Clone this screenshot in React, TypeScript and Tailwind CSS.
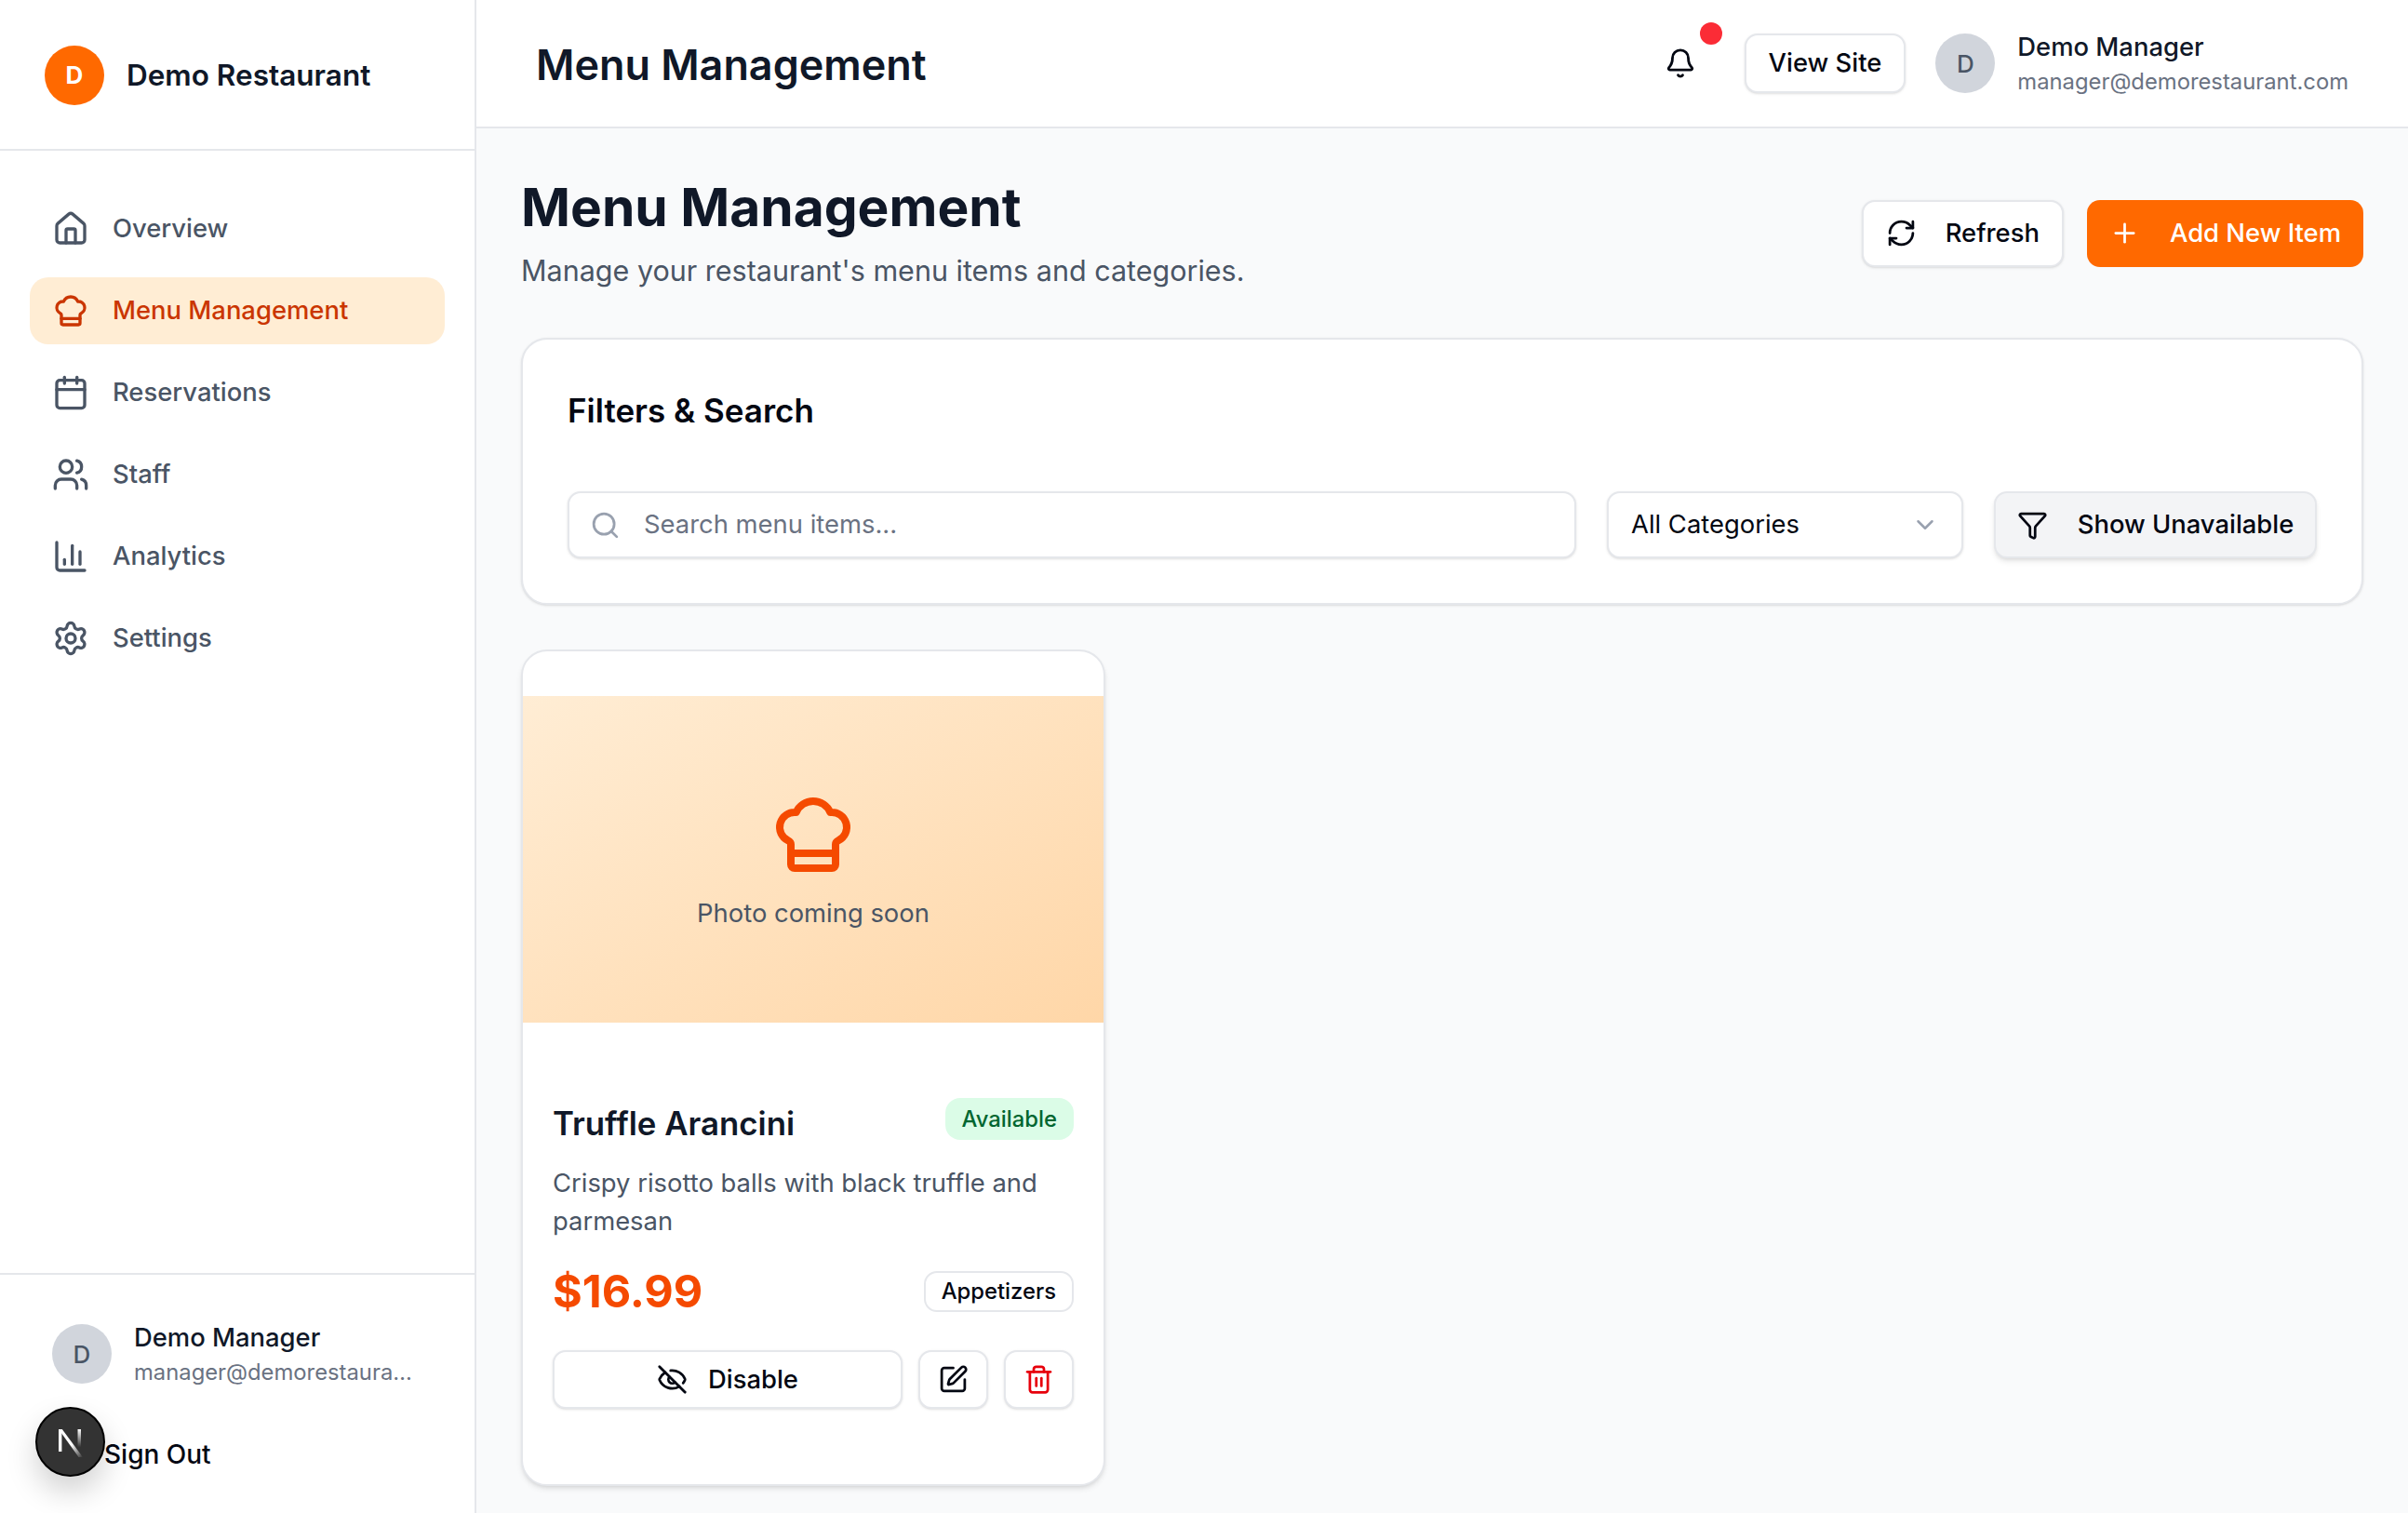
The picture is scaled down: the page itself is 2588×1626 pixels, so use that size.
import {
  Bell,
  Calendar,
  ChartColumn,
  ChefHat,
  ChevronDown,
  EyeOff,
  Funnel,
  House,
  Plus,
  RefreshCw,
  Search,
  Settings,
  SquarePen,
  Trash2,
  Users,
} from "lucide-react";

const navItems = [
  { label: "Overview", icon: House },
  { label: "Menu Management", icon: ChefHat, active: true },
  { label: "Reservations", icon: Calendar },
  { label: "Staff", icon: Users },
  { label: "Analytics", icon: ChartColumn },
  { label: "Settings", icon: Settings },
];

const Sidebar = () => (
  <aside className="flex w-[512px] shrink-0 flex-col border-r-2 border-gray-200 bg-white">
    <div className="flex h-[162px] items-center gap-6 border-b-2 border-gray-200 pt-[1px] pl-12">
      <div className="flex h-16 w-16 items-center justify-center rounded-full bg-orange-500 text-[26px] font-bold text-white">
        D
      </div>
      <span className="text-[31.5px] font-semibold text-gray-900">Demo Restaurant</span>
    </div>

    <nav className="flex flex-1 flex-col gap-4 px-8 pt-12">
      {navItems.map((item) => {
        const Icon = item.icon;
        return (
          <div
            key={item.label}
            className={
              item.active
                ? "flex h-[72px] items-center gap-[25px] rounded-[20px] bg-orange-100 pl-[24px] text-orange-700"
                : "flex h-[72px] items-center gap-[25px] rounded-[20px] pl-[24px] text-gray-600"
            }
          >
            <Icon size={40} strokeWidth={2} />
            <span className="text-[27.4px] font-medium">{item.label}</span>
          </div>
        );
      })}
    </nav>

    <div className="border-t-2 border-gray-200 pb-[43px] pt-[48px]">
      <div className="flex items-center gap-6 pl-14">
        <div className="flex h-16 w-16 items-center justify-center rounded-full bg-gray-300 text-[26px] font-medium text-gray-600">
          D
        </div>
        <div className="min-w-0">
          <p className="text-[27.4px] font-medium leading-[38px] text-gray-900">Demo Manager</p>
          <p className="mt-[2px] w-[306px] truncate text-[23.8px] leading-[34px] text-gray-500">
            manager@demorestaurant.com
          </p>
        </div>
      </div>
      <div className="mt-[51px] pl-[112px] text-[28px] font-medium leading-[40px] text-gray-950">Sign Out</div>
    </div>
  </aside>
);

const Header = () => (
  <header className="flex h-[138px] shrink-0 items-center justify-between border-b-2 border-gray-200 bg-white pl-16 pr-[64px]">
    <h1 className="pt-[6px] text-[44.9px] font-semibold text-gray-900">Menu Management</h1>
    <div className="flex items-center">
      <div className="relative mr-[52px] text-gray-950">
        <Bell size={34} />
        <span className="absolute -top-[27px] left-[38px] h-6 w-6 rounded-full bg-red-500" />
      </div>
      <button className="h-16 rounded-[14px] border-2 border-gray-200 bg-white px-[24px] text-[27.4px] font-medium text-gray-950 shadow-sm">
        View Site
      </button>
      <div className="ml-8 flex items-center gap-6">
        <div className="flex h-16 w-16 items-center justify-center rounded-full bg-gray-300 text-[26px] font-medium text-gray-600">
          D
        </div>
        <div>
          <p className="text-[27.4px] font-medium leading-[38px] text-gray-900">Demo Manager</p>
          <p className="mt-[2px] text-[23.8px] leading-[34px] text-gray-500">manager@demorestaurant.com</p>
        </div>
      </div>
    </div>
  </header>
);

const MenuCard = () => (
  <div className="w-[628px] overflow-hidden rounded-[28px] border-2 border-gray-200 bg-white pb-[81px] pt-[48px] shadow-md">
    <div className="flex h-[351px] flex-col items-center justify-center bg-gradient-to-br from-orange-100 to-orange-200 pt-[5px]">
      <ChefHat size={96} strokeWidth={2} className="text-orange-600" />
      <p className="mt-[16px] text-[27.4px] text-gray-600">Photo coming soon</p>
    </div>
    <div className="px-[32px] pt-[81px]">
      <div className="flex items-start justify-between">
        <h3 className="mt-[4px] text-[34.8px] font-semibold leading-[46px] text-gray-900">Truffle Arancini</h3>
        <span className="flex h-[45px] items-center rounded-[16px] bg-green-100 px-[18px] text-[23.8px] font-medium text-green-800">
          Available
        </span>
      </div>
      <p className="mt-[21px] text-[27.4px] leading-[41px] text-gray-600">
        Crispy risotto balls with black truffle and parmesan
      </p>
      <div className="mt-[25px] flex items-center justify-between">
        <span className="text-[48.5px] font-bold leading-[60px] text-orange-600">$16.99</span>
        <span className="flex h-[44px] items-center rounded-[14px] border-2 border-gray-200 px-[17px] text-[23.8px] font-medium text-gray-950">
          Appetizers
        </span>
      </div>
      <div className="mt-[33px] flex gap-[17px]">
        <button className="flex h-[63px] flex-1 items-center justify-center gap-[22px] rounded-[14px] border-2 border-gray-200 bg-white text-[27.4px] font-medium text-gray-950 shadow-sm">
          <EyeOff size={33} />
          Disable
        </button>
        <button className="flex h-[63px] w-[75px] items-center justify-center rounded-[14px] border-2 border-gray-200 bg-white text-gray-950 shadow-sm">
          <SquarePen size={33} />
        </button>
        <button className="flex h-[63px] w-[75px] items-center justify-center rounded-[14px] border-2 border-gray-200 bg-white text-red-600 shadow-sm">
          <Trash2 size={33} />
        </button>
      </div>
    </div>
  </div>
);

export default function App() {
  return (
    <div className="flex h-[1626px] overflow-hidden bg-gray-50 font-['Inter',sans-serif]">
      <Sidebar />
      <div className="flex min-w-0 flex-1 flex-col">
        <Header />
        <main className="flex-1 px-[48px] pt-[55px]">
          <div className="flex items-center justify-between">
            <div>
              <h2 className="text-[56.9px] font-bold leading-[60px] text-gray-900">Menu Management</h2>
              <p className="mt-[16px] text-[30.5px] leading-[44px] text-gray-600">
                Manage your restaurant's menu items and categories.
              </p>
            </div>
            <div className="mb-[5px] flex gap-[25px]">
              <button className="flex h-[72px] items-center gap-[31px] rounded-[14px] border-2 border-gray-200 bg-white px-[24px] text-[27.4px] font-medium text-gray-950 shadow-sm">
                <RefreshCw size={33} />
                Refresh
              </button>
              <button className="flex h-[72px] items-center gap-[32px] rounded-[14px] bg-orange-500 px-[24px] text-[27.4px] font-medium text-white">
                <Plus size={33} />
                Add New Item
              </button>
            </div>
          </div>

          <section className="mt-[50px] h-[287px] rounded-[28px] border-2 border-gray-200 bg-white px-[48px] pt-[53px] shadow-sm">
            <h3 className="text-[35px] font-semibold leading-[46px] text-gray-950">Filters &amp; Search</h3>
            <div className="mt-[64px] flex gap-[33px]">
              <div className="flex h-[72px] flex-1 items-center gap-[25px] rounded-[14px] border-2 border-gray-200 bg-white pl-[22px] shadow-sm">
                <Search size={33} className="text-gray-400" />
                <span className="text-[27.4px] text-gray-500">Search menu items...</span>
              </div>
              <div className="flex h-[72px] w-[383px] items-center justify-between rounded-[14px] border-2 border-gray-200 bg-white px-[24px] shadow-sm">
                <span className="text-[27.4px] text-gray-950">All Categories</span>
                <ChevronDown size={30} className="text-gray-400" />
              </div>
              <button className="flex h-[72px] w-[347px] items-center justify-center gap-[32px] rounded-[14px] border-2 border-gray-200 bg-gray-100 text-[27.4px] font-medium text-gray-950 shadow-md">
                <Funnel size={33} />
                Show Unavailable
              </button>
            </div>
          </section>

          <div className="mt-[48px]">
            <MenuCard />
          </div>
        </main>
      </div>

      {/* dev tools badge over the sidebar */}
      <div className="absolute left-[38px] top-[1512px] flex h-[75px] w-[75px] items-center justify-center rounded-full border-2 border-black bg-[#333333] shadow-[0_16px_32px_rgba(0,0,0,0.18)]">
        <svg width="40" height="40" viewBox="0 0 40 40" fill="none">
          <defs>
            <linearGradient id="nFade" x1="0" y1="0" x2="1" y2="1">
              <stop offset="0.55" stopColor="#ffffff" />
              <stop offset="1" stopColor="#ffffff" stopOpacity="0" />
            </linearGradient>
            <linearGradient id="nBar" x1="0" y1="0" x2="0" y2="1">
              <stop offset="0" stopColor="#ffffff" />
              <stop offset="0.8" stopColor="#ffffff" stopOpacity="0" />
            </linearGradient>
          </defs>
          <path d="M7 6h3.4v24H7z" fill="#ffffff" />
          <path d="M7 6h3.8L33 36h-4.4z" fill="url(#nFade)" />
          <path d="M27.5 6H31v24h-3.5z" fill="url(#nBar)" />
        </svg>
      </div>
    </div>
  );
}
